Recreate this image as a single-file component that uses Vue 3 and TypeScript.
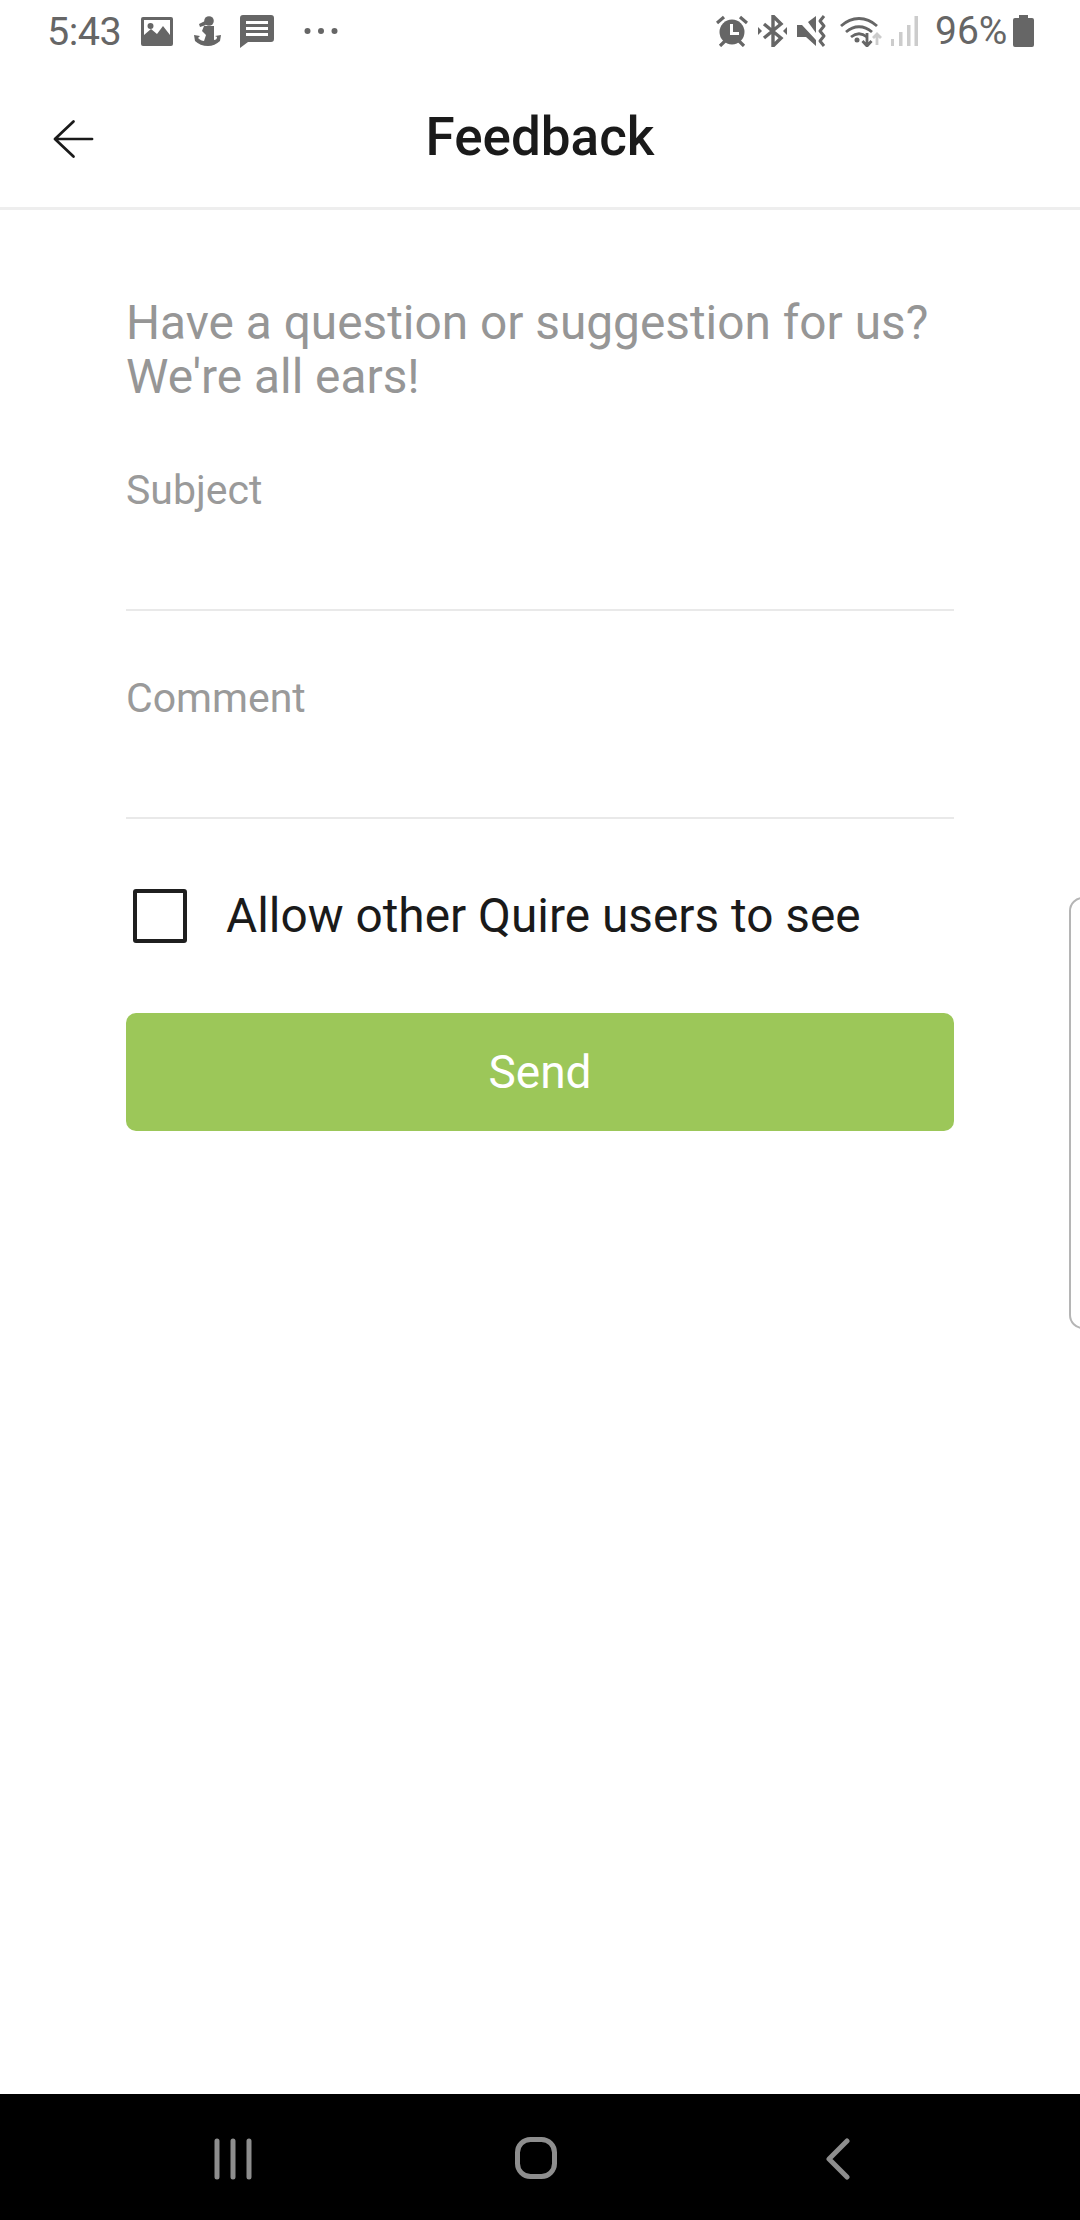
<script setup lang="ts">
const fields: string[] = ['Subject', 'Comment']
</script>

<template>
  <div class="screen">
    <div class="status">
      <div class="status-left">
        <span class="time">5:43</span>
        <svg class="ic-img" viewBox="0 0 32 29"><path fill="#666" fill-rule="evenodd" d="M2 0h28a2 2 0 0 1 2 2v25a2 2 0 0 1-2 2H2a2 2 0 0 1-2-2V2a2 2 0 0 1 2-2zm1 3v15l7-6 6 5 6-8 7 9V3zM9.500 6a3 3 0 1 1 0 6 3 3 0 0 1 0-6z"/></svg>
        <svg class="ic-anchor" viewBox="0 0 27 30"><circle cx="15" cy="5" r="4.800" fill="#666"/><path fill="#666" d="M11 5L5 8l1 3 6-2zM10 10H20V24C22 24 23 23 23 21L21 20 27 19 26 25C23 28 18 30 14 30 9 30 4 28 1 25L0 19 6 20 4 22C6 24 8 25 10 25L12 19 8 15z"/></svg>
        <svg class="ic-msg" viewBox="0 0 34 33"><path fill="#666" fill-rule="evenodd" d="M3 0h28a3 3 0 0 1 3 3v21a3 3 0 0 1-3 3H8l-8 6V3a3 3 0 0 1 3-3zm3 6v3h22V6zm0 6v3h22v-3zm0 6v3h22v-3z"/></svg>
        <svg class="ic-dots" viewBox="0 0 34 8"><circle cx="3.500" cy="4" r="3" fill="#666"/><circle cx="17" cy="4" r="3" fill="#666"/><circle cx="30.500" cy="4" r="3" fill="#666"/></svg>
      </div>
      <div class="status-right">
        <svg class="ic-alarm" viewBox="0 0 32 32"><circle cx="16" cy="17" r="12.500" fill="#666"/><path d="M15.500 9v9.500H23" fill="none" stroke="#fff" stroke-width="3"/><path d="M1 8l7-6M31 8l-7-6M4 31l5-5M28 31l-5-5" fill="none" stroke="#666" stroke-width="3.200"/></svg>
        <svg class="ic-bt" viewBox="0 0 29 32"><path d="M6 9l17 14-8 8V1l8 8L6 23" fill="none" stroke="#666" stroke-width="3.400"/><path fill="#666" d="M0 12l4 4-4 4zM29 12l-4 4 4 4z"/></svg>
        <svg class="ic-mute" viewBox="0 0 31 32"><path fill="#666" d="M0 10h5L19 25v6L9 22H0zM11 7l8-6v17z"/><path d="M1 0l20 26" stroke="#fff" stroke-width="1.500"/><path d="M27 1l-4 5 4 5-4 5 4 5-4 5 4 5" fill="none" stroke="#666" stroke-width="3" stroke-linejoin="round"/></svg>
        <svg class="ic-wifi" viewBox="0 0 43 32"><path d="M1 11c11-10 25-10 36 0M6 17c8-7 18-7 26 0M11 22c5-4 11-4 16 0" fill="none" stroke="#666" stroke-width="2.800"/><circle cx="17" cy="25" r="2.500" fill="#666"/><path d="M27 18v13M22.500 26l4.500 5 4.500-5" fill="none" stroke="#666" stroke-width="2.800"/><path d="M37 30V19M33 23l4-4 4 4" fill="none" stroke="#ccc" stroke-width="2.800"/></svg>
        <svg class="ic-signal" viewBox="0 0 27 30"><path fill="#ccc" d="M0 23h3v7H0zM8 16h3.500v14H8zM16 9h3.500v21H16zM23.500 0H27v30h-3.500z"/></svg>
        <span class="battery-text">96%</span>
        <svg class="ic-batt" viewBox="0 0 21 32"><path fill="#666" d="M6 0h9v3h4a2 2 0 0 1 2 2v25a2 2 0 0 1-2 2H2a2 2 0 0 1-2-2V5a2 2 0 0 1 2-2h4z"/></svg>
      </div>
    </div>

    <header class="bar">
      <svg class="back" viewBox="0 0 42 40"><path d="M40 20H3M21 2L2 20l19 18" fill="none" stroke="#1a1a1a" stroke-width="2.800" stroke-linecap="round" stroke-linejoin="round"/></svg>
      <h1 class="title">Feedback</h1>
    </header>

    <main class="content">
      <p class="intro">Have a question or suggestion for us?<br />We're all ears!</p>
      <div v-for="f in fields" :key="f" class="field">
        <span class="label">{{ f }}</span>
      </div>
      <label class="check-row">
        <span class="box"></span>
        <span class="check-text">Allow other Quire users to see</span>
      </label>
      <button class="send" type="button">Send</button>
    </main>

    <div class="edge"></div>

    <nav class="nav">
      <svg class="nav-recent" viewBox="0 0 38 42"><path d="M3 3v36M19 3v36M35 3v36" stroke="#8e8e8e" stroke-width="5" stroke-linecap="round"/></svg>
      <svg class="nav-home" viewBox="0 0 42 42"><rect x="2.500" y="2.500" width="37" height="37" rx="13" fill="none" stroke="#8e8e8e" stroke-width="5"/></svg>
      <svg class="nav-back" viewBox="0 0 24 42"><path d="M21 3L3 21l18 18" fill="none" stroke="#8e8e8e" stroke-width="5" stroke-linecap="round" stroke-linejoin="round"/></svg>
    </nav>
  </div>
</template>

<style scoped>
.screen {
  position: relative;
  width: 1080px;
  height: 2220px;
  background: #fff;
  display: flex;
  flex-direction: column;
  overflow: hidden;
  font-family: Roboto, "Liberation Sans", sans-serif;
}
.status {
  height: 62px;
  padding: 0 46px 0 47px;
  display: flex;
  justify-content: space-between;
  align-items: center;
  flex: none;
  box-sizing: border-box;
}
.status-left,
.status-right {
  display: flex;
  align-items: center;
}
.time {
  font-size: 39.500px;
  color: #666;
  letter-spacing: -0.5px;
  width: 72px;
  margin-right: 22px;
}
.ic-img { width: 32px; height: 29px; margin-right: 21px; }
.ic-anchor { width: 27px; height: 30px; margin-right: 19px; }
.ic-msg { width: 34px; height: 33px; margin-right: 30px; }
.ic-dots { width: 34px; height: 8px; }
.ic-alarm { width: 32px; height: 32px; margin-right: 10px; }
.ic-bt { width: 29px; height: 32px; margin-right: 10px; }
.ic-mute { width: 31px; height: 32px; margin-right: 12px; }
.ic-wifi { width: 43px; height: 32px; margin-right: 8px; }
.ic-signal { width: 27px; height: 30px; margin-right: 17px; }
.battery-text { font-size: 39px; color: #666; width: 69px; margin-right: 9px; }
.ic-batt { width: 21px; height: 32px; }
.bar {
  position: relative;
  flex: none;
  height: 148px;
  box-sizing: border-box;
  border-bottom: 3px solid #eee;
  display: flex;
  align-items: center;
  justify-content: center;
  padding-top: 5px;
}
.back {
  position: absolute;
  left: 53px;
  top: 57px;
  width: 41px;
  height: 40px;
}
.title {
  margin: 0;
  font-size: 53px;
  font-weight: 500;
  color: #1a1a1a;
}
.content {
  flex: 1;
  padding: 86px 126px 0;
  display: flex;
  flex-direction: column;
}
.intro {
  margin: 0;
  font-size: 47.800px;
  line-height: 54px;
  color: #969696;
}
.field {
  height: 207px;
  padding-top: 63px;
  box-sizing: border-box;
  border-bottom: 2px solid #e9e9e9;
}
.field + .field {
  height: 208px;
  padding-top: 64px;
}
.label {
  display: block;
  font-size: 41px;
  line-height: 46px;
  color: #9a9a9a;
}
.check-row {
  display: flex;
  align-items: center;
  margin-top: 69px;
  height: 56px;
  padding-left: 7px;
}
.box {
  width: 54px;
  height: 54px;
  box-sizing: border-box;
  border: 4px solid #1f1f1f;
  border-radius: 3px;
  margin-right: 39px;
}
.check-text {
  font-size: 47.800px;
  color: #1a1a1a;
}
.send {
  margin-top: 69px;
  height: 118px;
  border: 0;
  border-radius: 10px;
  background: #9cc759;
  color: #fff;
  font-family: inherit;
  font-size: 46px;
}
.edge {
  position: absolute;
  right: -21px;
  top: 897px;
  width: 28px;
  height: 428px;
  border: 2px solid #b5b5b5;
  border-radius: 14px;
}
.nav {
  position: relative;
  flex: none;
  height: 126px;
  background: #000;
}
.nav-recent { position: absolute; left: 214px; top: 44px; width: 38px; height: 42px; }
.nav-home { position: absolute; left: 515px; top: 43px; width: 42px; height: 42px; }
.nav-back { position: absolute; left: 826px; top: 44px; width: 24px; height: 42px; }
</style>
